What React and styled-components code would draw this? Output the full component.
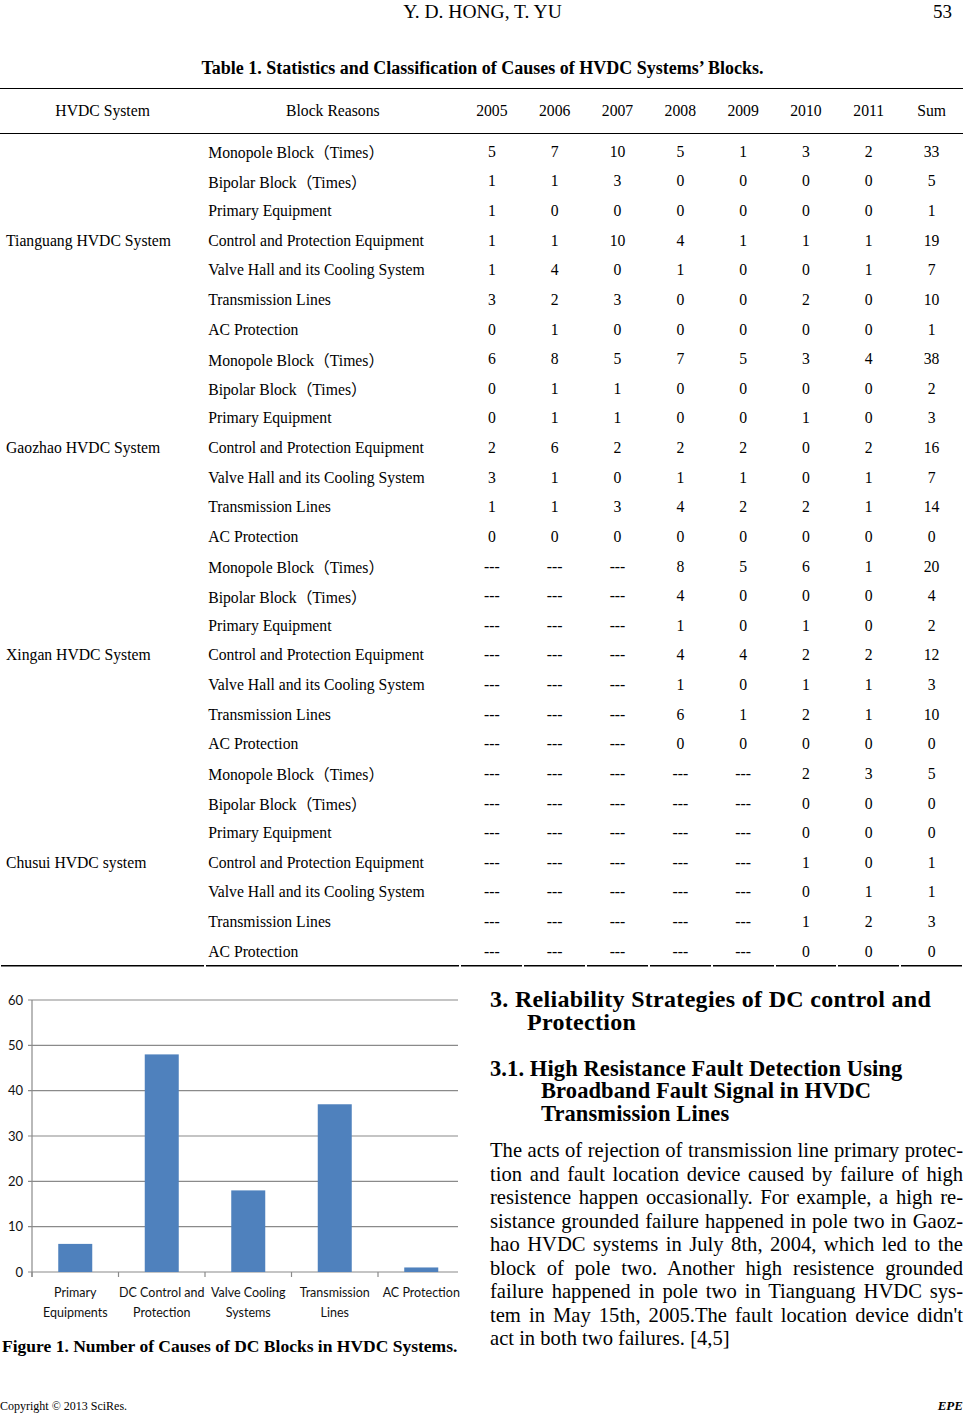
import React from 'react';
import styled, { createGlobalStyle } from 'styled-components';

const GlobalStyle = createGlobalStyle`
  body {
    margin: 0;
    background: #fff;
    color: #000;
    font-family: "Liberation Serif", "Times New Roman", serif;
  }
`;

const SERIF = `"Liberation Serif", "Noto Sans CJK SC", serif`;

const SYSTEMS = [
  {
    name: 'Tianguang HVDC System',
    rows: [
      [5, 7, 10, 5, 1, 3, 2, 33],
      [1, 1, 3, 0, 0, 0, 0, 5],
      [1, 0, 0, 0, 0, 0, 0, 1],
      [1, 1, 10, 4, 1, 1, 1, 19],
      [1, 4, 0, 1, 0, 0, 1, 7],
      [3, 2, 3, 0, 0, 2, 0, 10],
      [0, 1, 0, 0, 0, 0, 0, 1],
    ],
  },
  {
    name: 'Gaozhao HVDC System',
    rows: [
      [6, 8, 5, 7, 5, 3, 4, 38],
      [0, 1, 1, 0, 0, 0, 0, 2],
      [0, 1, 1, 0, 0, 1, 0, 3],
      [2, 6, 2, 2, 2, 0, 2, 16],
      [3, 1, 0, 1, 1, 0, 1, 7],
      [1, 1, 3, 4, 2, 2, 1, 14],
      [0, 0, 0, 0, 0, 0, 0, 0],
    ],
  },
  {
    name: 'Xingan HVDC System',
    rows: [
      ['---', '---', '---', 8, 5, 6, 1, 20],
      ['---', '---', '---', 4, 0, 0, 0, 4],
      ['---', '---', '---', 1, 0, 1, 0, 2],
      ['---', '---', '---', 4, 4, 2, 2, 12],
      ['---', '---', '---', 1, 0, 1, 1, 3],
      ['---', '---', '---', 6, 1, 2, 1, 10],
      ['---', '---', '---', 0, 0, 0, 0, 0],
    ],
  },
  {
    name: 'Chusui HVDC system',
    rows: [
      ['---', '---', '---', '---', '---', 2, 3, 5],
      ['---', '---', '---', '---', '---', 0, 0, 0],
      ['---', '---', '---', '---', '---', 0, 0, 0],
      ['---', '---', '---', '---', '---', 1, 0, 1],
      ['---', '---', '---', '---', '---', 0, 1, 1],
      ['---', '---', '---', '---', '---', 1, 2, 3],
      ['---', '---', '---', '---', '---', 0, 0, 0],
    ],
  },
];

const REASONS = [
  'Monopole Block（Times）',
  'Bipolar Block（Times）',
  'Primary Equipment',
  'Control and Protection Equipment',
  'Valve Hall and its Cooling System',
  'Transmission Lines',
  'AC Protection',
];

const YEARS = ['2005', '2006', '2007', '2008', '2009', '2010', '2011', 'Sum'];

const CAUSES = [
  { lines: ['Primary', 'Equipments'], value: 6.2 },
  { lines: ['DC Control and', 'Protection'], value: 48 },
  { lines: ['Valve Cooling', 'Systems'], value: 18 },
  { lines: ['Transmission', 'Lines'], value: 37 },
  { lines: ['AC Protection'], value: 1 },
];

const PARAGRAPH = [
  'The acts of rejection of transmission line primary protec-',
  'tion and fault location device caused by failure of high',
  'resistence happen occasionally. For example, a high re-',
  'sistance grounded failure happened in pole two in Gaoz-',
  'hao HVDC systems in July 8th, 2004, which led to the',
  'block of pole two. Another high resistence grounded',
  'failure happened in pole two in Tianguang HVDC sys-',
  "tem in May 15th, 2005.The fault location device didn't",
  'act in both two failures. [4,5]',
];

const Page = styled.div`
  width: 965px;
  height: 1414px;
  display: flex;
  flex-direction: column;
  overflow: hidden;
`;

const RunningHead = styled.header`
  display: grid;
  grid-template-columns: 1fr auto 1fr;
  align-items: center;
  height: 24px;
  line-height: 24px;
`;

const Authors = styled.div`
  grid-column: 2;
  font-size: 19.5px;
`;

const PageNo = styled.div`
  justify-self: end;
  padding-right: 13px;
  font-size: 19px;
`;

const TableTitle = styled.div`
  margin-top: 32px;
  text-align: center;
  font-weight: bold;
  font-size: 18px;
  line-height: 24px;
`;

const DataTable = styled.table`
  margin-top: 8px;
  width: 963px;
  border-collapse: collapse;
  table-layout: fixed;
  font-family: ${SERIF};
  font-size: 15.7px;

  tbody tr:first-child td {
    padding-top: 3px;
  }
`;

const HeadCell = styled.th`
  height: 44px;
  padding: 0;
  font-weight: normal;
  text-align: center;
  vertical-align: middle;
  border-top: 1.5px solid #000;
  border-bottom: 1.5px solid #000;
`;

const Cell = styled.td`
  height: 29.63px;
  padding: 0 0 0 ${(p) => p.$indent || 0}px;
  text-align: ${(p) => p.$align || 'center'};
  vertical-align: middle;
  white-space: nowrap;
  background: ${(p) =>
    p.$bottom ? 'linear-gradient(#000, #000) no-repeat center bottom / calc(100% - 2px) 1.5px' : 'none'};
`;

const Lower = styled.div`
  display: grid;
  grid-template-columns: 465px 473px;
  column-gap: 25px;
`;

const Figure = styled.figure`
  margin: 13px 0 0;
`;

const Chart = styled.svg`
  display: block;
  font-family: Lato, "Open Sans", sans-serif;
`;

const FigCaption = styled.figcaption`
  margin-top: 10px;
  padding-left: 2px;
  font-weight: bold;
  font-size: 17.5px;
  line-height: 22px;
  white-space: nowrap;
`;

const Article = styled.section``;

const SectionTitle = styled.h2`
  margin: 21px 0 0;
  padding-left: 37px;
  text-indent: -37px;
  font-size: 24px;
  line-height: 23.5px;
  letter-spacing: 0.3px;
  font-weight: bold;
  white-space: nowrap;
`;

const SubTitle = styled.h3`
  margin: 23px 0 0;
  padding-left: 51px;
  text-indent: -51px;
  font-size: 22.5px;
  line-height: 22.5px;
  letter-spacing: 0.1px;
  font-weight: bold;
  white-space: nowrap;
`;

const Body = styled.p`
  margin: 14px 0 0;
  font-size: 20.6px;
  line-height: 23.5px;
`;

const Line = styled.span`
  display: block;
  white-space: nowrap;
  text-align: justify;
  text-align-last: ${(p) => (p.$last ? 'left' : 'justify')};
`;

const Footer = styled.footer`
  margin-top: auto;
  display: flex;
  justify-content: space-between;
  align-items: center;
  height: 16px;
  line-height: 16px;
  font-size: 12px;
`;

const Journal = styled.span`
  padding-right: 2px;
  font-weight: bold;
  font-style: italic;
  font-size: 13px;
`;

function BarChart() {
  const x0 = 32;
  const xEnd = 458;
  const yTop = 20;
  const yZero = 292;
  const unit = (yZero - yTop) / 60;
  const cw = 86.5;
  const barW = 34;
  const ticks = [0, 10, 20, 30, 40, 50, 60];

  return (
    <Chart width="465" height="345" viewBox="0 0 465 345">
      {ticks.map((t) => {
        const y = yZero - t * unit;
        return (
          <g key={t}>
            <line x1={x0 - 4} x2={xEnd} y1={y} y2={y} stroke="#8a8a8a" strokeWidth="1.2" />
            <text x="23" y={y + 4.5} fontSize="13" textAnchor="end" fill="#111">
              {t}
            </text>
          </g>
        );
      })}
      <line x1={x0} x2={x0} y1={yTop} y2={yZero + 5} stroke="#8a8a8a" strokeWidth="1.2" />
      {CAUSES.map((c, i) => (
        <line
          key={`t${i}`}
          x1={x0 + cw * i}
          x2={x0 + cw * i}
          y1={yZero}
          y2={yZero + 5}
          stroke="#8a8a8a"
          strokeWidth="1.2"
        />
      ))}
      {CAUSES.map((c, i) => {
        const cx = x0 + cw * (i + 0.5);
        const h = c.value * unit;
        return (
          <g key={c.lines[0]}>
            <rect x={cx - barW / 2} y={yZero - h} width={barW} height={h} fill="#4f81bd" />
            {c.lines.map((ln, j) => (
              <text key={ln} x={cx} y={317 + j * 20} fontSize="12.5" textAnchor="middle" fill="#111">
                {ln}
              </text>
            ))}
          </g>
        );
      })}
    </Chart>
  );
}

export default function App() {
  return (
    <Page>
      <GlobalStyle />
      <RunningHead>
        <Authors>Y. D. HONG, T. YU</Authors>
        <PageNo>53</PageNo>
      </RunningHead>

      <TableTitle>Table 1. Statistics and Classification of Causes of HVDC Systems’ Blocks.</TableTitle>

      <DataTable>
        <colgroup>
          <col style={{ width: 205 }} />
          <col style={{ width: 255 }} />
          {YEARS.map((y) => (
            <col key={y} style={{ width: 62.75 }} />
          ))}
        </colgroup>
        <thead>
          <tr>
            <HeadCell>HVDC System</HeadCell>
            <HeadCell>Block Reasons</HeadCell>
            {YEARS.map((y) => (
              <HeadCell key={y}>{y}</HeadCell>
            ))}
          </tr>
        </thead>
        <tbody>
          {SYSTEMS.map((sys, si) => {
            const lastGroup = si === SYSTEMS.length - 1;
            return sys.rows.map((vals, ri) => {
              const bottom = lastGroup && ri === sys.rows.length - 1;
              return (
                <tr key={`${si}-${ri}`}>
                  {ri === 0 && (
                    <Cell rowSpan={7} $align="left" $indent={6} $bottom={lastGroup}>
                      {sys.name}
                    </Cell>
                  )}
                  <Cell $align="left" $indent={3} $bottom={bottom}>
                    {REASONS[ri]}
                  </Cell>
                  {vals.map((v, vi) => (
                    <Cell key={vi} $bottom={bottom}>
                      {v}
                    </Cell>
                  ))}
                </tr>
              );
            });
          })}
        </tbody>
      </DataTable>

      <Lower>
        <Figure>
          <BarChart />
          <FigCaption>Figure 1. Number of Causes of DC Blocks in HVDC Systems.</FigCaption>
        </Figure>

        <Article>
          <SectionTitle>
            3. Reliability Strategies of DC control and
            <br />
            Protection
          </SectionTitle>
          <SubTitle>
            3.1. High Resistance Fault Detection Using
            <br />
            Broadband Fault Signal in HVDC
            <br />
            Transmission Lines
          </SubTitle>
          <Body>
            {PARAGRAPH.map((ln, i) => (
              <Line key={i} $last={i === PARAGRAPH.length - 1}>
                {ln}
              </Line>
            ))}
          </Body>
        </Article>
      </Lower>

      <Footer>
        <span>Copyright © 2013 SciRes.</span>
        <Journal>EPE</Journal>
      </Footer>
    </Page>
  );
}
